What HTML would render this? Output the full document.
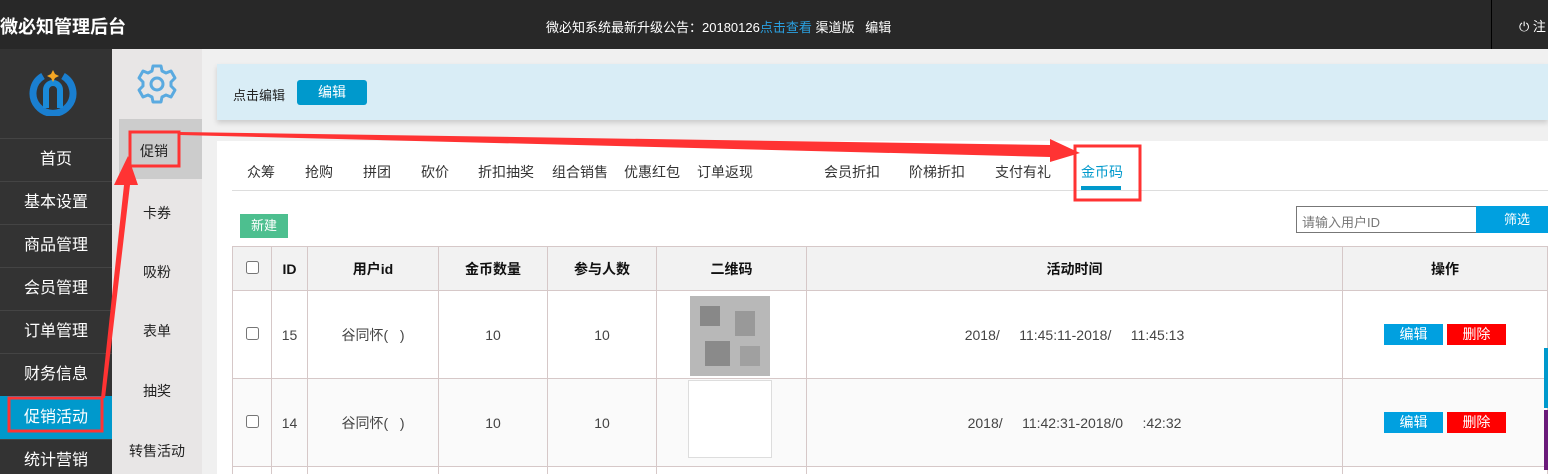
<!DOCTYPE html><html><head><meta charset="utf-8"><style>
*{margin:0;padding:0;box-sizing:border-box}
html{width:1548px;height:474px;overflow:hidden}
body{width:1548px;height:474px;overflow:hidden;background:#f0f0f0;font-family:"Liberation Sans","Noto Sans CJK SC",sans-serif;position:relative;font-size:14px;color:#333}
.a{position:absolute}
.hd{left:0;top:0;width:1548px;height:49px;background:#282828;color:#fff}
.side{left:0;top:49px;width:112px;height:425px;background:#333;overflow:hidden}
.mi{position:absolute;left:0;width:112px;height:43px;border-top:1px solid #444;color:#fff;font-size:16px;text-align:center;line-height:42px}
.s2{left:112px;top:49px;width:90px;height:425px;background:#e8e6e6;overflow:hidden}
.si{position:absolute;width:90px;text-align:center;font-size:14px;color:#222}
.tab{position:absolute;top:162px;font-size:14px;color:#333}
.wrap{position:absolute;left:0;top:0;width:1548px;height:474px;overflow:hidden}
table{border-collapse:collapse;position:absolute;left:232px;top:246px;width:1316px;font-size:14px}
td,th{border:1px solid #d6c8c8;text-align:center;color:#444}
th{background:#f2f2f2;height:44px;color:#111}
.b{display:inline-block;width:59px;height:21px;line-height:21px;color:#fff;font-size:14px}
</style></head><body><div class="wrap">
<div class="a hd"><div class="a" style="left:0;top:13px;font-size:18px;font-weight:bold">微必知管理后台</div>
<div class="a" style="left:546px;top:17px;font-size:13px">微必知系统最新升级公告：20180126<span style="color:#2aa0e0">点击查看</span> 渠道版 &nbsp; 编辑</div>
<div class="a" style="left:1491px;top:0;width:1px;height:49px;background:#000"></div>
<div class="a" style="left:1519px;top:16px;font-size:13px">⏻ 注</div></div>
<div class="a side">
<svg class="a" style="left:29px;top:19px" width="48" height="48" viewBox="0 0 48 48"><path d="M14 8 A20 20 0 1 0 34 8" fill="none" stroke="#1a7fd0" stroke-width="7"/><path d="M17 40 V22 a7 7 0 0 1 14 0 V40" fill="none" stroke="#1a8ad8" stroke-width="6"/><path d="M24 2 l2 4 4 2 -4 2 -2 4 -2 -4 -4 -2 4 -2z" fill="#f5a623"/></svg>
<div class="mi" style="top:89px">首页</div><div class="mi" style="top:132px">基本设置</div><div class="mi" style="top:175px">商品管理</div><div class="mi" style="top:218px">会员管理</div><div class="mi" style="top:261px">订单管理</div><div class="mi" style="top:304px">财务信息</div><div class="mi" style="top:347px;background:#0099cc;border-color:#0099cc">促销活动</div><div class="mi" style="top:390px">统计营销</div></div>
<div class="a s2">
<svg class="a" style="left:24px;top:14px" width="42" height="42" viewBox="0 0 42 42"><path d="M17 3h8l1 5 4 2 5-2 4 7-4 4v4l4 4-4 7-5-2-4 2-1 5h-8l-1-5-4-2-5 2-4-7 4-4v-4l-4-4 4-7 5 2 4-2z" fill="none" stroke="#5aaae0" stroke-width="3" stroke-linejoin="round"/><circle cx="21" cy="21" r="6" fill="none" stroke="#5aaae0" stroke-width="3"/></svg>
<div class="a" style="left:7px;top:70px;width:83px;height:60px;background:#ccc"></div>
<div class="a" style="left:80px;top:92px;width:0;height:0;border:10px solid transparent;border-right-color:#f0f0f0"></div>
<div class="si" style="top:92px;left:-3px">促销</div><div class="si" style="top:154px">卡券</div><div class="si" style="top:213px">吸粉</div><div class="si" style="top:272px">表单</div><div class="si" style="top:332px">抽奖</div><div class="si" style="top:392px">转售活动</div></div>
<div class="a" style="left:217px;top:64px;width:1331px;height:56px;background:#d9edf6;box-shadow:0 3px 5px rgba(0,0,0,.15)"></div>
<div class="a" style="left:233px;top:85px;font-size:13px;color:#222">点击编辑</div>
<div class="a" style="left:297px;top:80px;width:70px;height:25px;background:#0099cc;border-radius:3px;color:#fff;text-align:center;line-height:25px">编辑</div>
<div class="a" style="left:217px;top:141px;width:1331px;height:333px;background:#fff"></div>
<div class="a" style="left:232px;top:190px;width:1316px;height:1px;background:#ddd"></div>
<div class="tab" style="left:247px">众筹</div><div class="tab" style="left:305px">抢购</div><div class="tab" style="left:363px">拼团</div><div class="tab" style="left:421px">砍价</div><div class="tab" style="left:478px">折扣抽奖</div><div class="tab" style="left:552px">组合销售</div><div class="tab" style="left:624px">优惠红包</div><div class="tab" style="left:697px">订单返现</div><div class="tab" style="left:824px">会员折扣</div><div class="tab" style="left:909px">阶梯折扣</div><div class="tab" style="left:995px">支付有礼</div><div class="tab" style="left:1081px;color:#0099cc">金币码</div>
<div class="a" style="left:1081px;top:186px;width:40px;height:4px;background:#0099cc"></div>
<div class="a" style="left:240px;top:214px;width:48px;height:24px;background:#4dbf8f;color:#fff;text-align:center;line-height:24px;font-size:13px">新建</div>
<div class="a" style="left:1296px;top:206px;width:181px;height:27px;border:1px solid #777;color:#777;font-size:13px;padding:5px 5px">请输入用户ID</div>
<div class="a" style="left:1476px;top:206px;width:72px;height:27px;background:#00a0e0;color:#fff;font-size:13px;line-height:27px;padding-left:28px">筛选</div>
<table><tr><th style="width:39px"><input type="checkbox"></th><th style="width:36px">ID</th><th style="width:131px">用户id</th><th style="width:109px">金币数量</th><th style="width:109px">参与人数</th><th style="width:150px">二维码</th><th style="width:536px">活动时间</th><th>操作</th></tr>
<tr style="height:88px"><td><input type="checkbox"></td><td>15</td><td>谷同怀(&nbsp;&nbsp;&nbsp;)</td><td>10</td><td>10</td><td></td><td>2018/&nbsp;&nbsp;&nbsp;&nbsp;&nbsp;11:45:11-2018/&nbsp;&nbsp;&nbsp;&nbsp;&nbsp;11:45:13</td><td><span class="b" style="background:#00a0e0">编辑</span> <span class="b" style="background:#f00">删除</span></td></tr>
<tr style="height:88px;background:#fafafa"><td><input type="checkbox"></td><td>14</td><td>谷同怀(&nbsp;&nbsp;&nbsp;)</td><td>10</td><td>10</td><td></td><td>2018/&nbsp;&nbsp;&nbsp;&nbsp;&nbsp;11:42:31-2018/0&nbsp;&nbsp;&nbsp;&nbsp;&nbsp;:42:32</td><td><span class="b" style="background:#00a0e0">编辑</span> <span class="b" style="background:#f00">删除</span></td></tr>
<tr style="height:20px"><td></td><td></td><td></td><td></td><td></td><td></td><td></td><td></td></tr></table>
<svg class="a" style="left:690px;top:296px" width="80" height="80"><rect width="80" height="80" fill="#b8b8b8"/><rect x="10" y="10" width="20" height="20" fill="#888"/><rect x="45" y="15" width="20" height="25" fill="#999"/><rect x="15" y="45" width="25" height="25" fill="#8a8a8a"/><rect x="50" y="50" width="20" height="20" fill="#a0a0a0"/></svg>
<div class="a" style="left:688px;top:380px;width:84px;height:78px;background:#fff;border:1px solid #ddd"></div>
<div class="a" style="left:1544px;top:348px;width:4px;height:60px;background:#0099cc"></div>
<div class="a" style="left:1544px;top:410px;width:4px;height:60px;background:#6a1b7a"></div>
<svg class="a" style="left:0;top:0" width="1548" height="474">
<g fill="none" stroke="#f33" stroke-width="3"><rect x="130" y="132" width="49" height="34"/><rect x="1075" y="146" width="65" height="54"/><rect x="9" y="398" width="93" height="33"/></g>
<polygon points="180,132 1050,145 1050,139 1080,153 1050,162 1050,157 180,135" fill="#f33"/>
<polygon points="101,398 124,185 114,185 128,156 138,185 130,185 105,398" fill="#f33"/>
</svg>
</div></body></html>
